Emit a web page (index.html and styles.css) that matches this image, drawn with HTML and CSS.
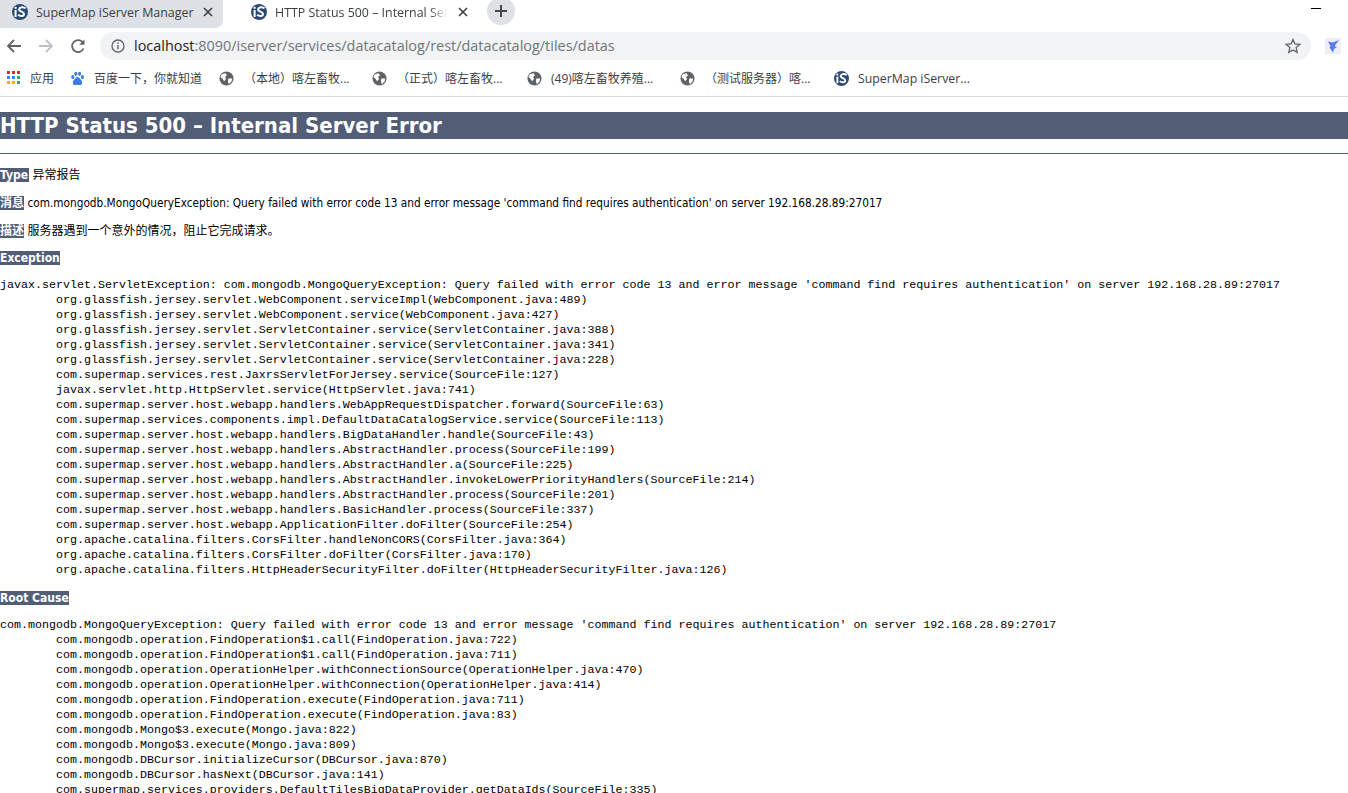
FILE: index.html
```html
<!DOCTYPE html>
<html lang="zh">
<head>
<meta charset="utf-8">
<title>HTTP Status 500 – Internal Server Error</title>
<link rel="stylesheet" href="styles.css">
</head>
<body>
<svg class="defs" width="0" height="0" aria-hidden="true">
  <symbol id="is-logo" viewBox="0 0 16 16">
    <circle cx="8" cy="8" r="8" fill="#2b4a73"/>
    <rect x="2.600" y="6" width="2" height="7" fill="#fff"/>
    <rect x="2.600" y="2.800" width="2" height="2" fill="#fff"/>
    <path d="M13.500 4.400C12 2.800 7.800 2.600 7.100 5.200 6.600 7.800 12 7.400 12 10 12 12.400 8.200 12.600 6.200 10.800" fill="none" stroke="#fff" stroke-width="2"/>
  </symbol>
  <symbol id="globe" viewBox="0 0 16 16">
    <circle cx="8" cy="8" r="7.500" fill="#5f6368"/>
    <path d="M3 3.500 7 2.500 8.500 4.500 6.500 6.500 7.500 8.500 5.500 11 3.500 8 1.500 6.500ZM10 8h4l-.5 3-3 3-1-3Z" fill="#fff"/>
  </symbol>
  <symbol id="tab-x" viewBox="0 0 10 10">
    <path d="M1 1l8 8M9 1l-8 8" stroke="#3c4043" stroke-width="1.600"/>
  </symbol>
</svg>

<header class="chrome">
  <div class="tabstrip">
    <div class="tab tab-inactive">
      <svg class="favicon"><use href="#is-logo"/></svg>
      <span class="tab-title">SuperMap iServer Manager</span>
      <svg class="tab-close"><use href="#tab-x"/></svg>
    </div>
    <div class="tab tab-active">
      <svg class="favicon"><use href="#is-logo"/></svg>
      <span class="tab-title tab-title-fade">HTTP Status 500 – Internal Server Error</span>
      <svg class="tab-close"><use href="#tab-x"/></svg>
    </div>
    <div class="newtab">
      <svg width="12" height="12" viewBox="0 0 12 12"><path d="M6 0v12M0 6h12" stroke="#44474b" stroke-width="2"/></svg>
    </div>
    <div class="window-min"></div>
  </div>
  <div class="toolbar">
    <svg class="nav" viewBox="0 0 16 16"><path d="M15 8H2M8 2 2 8l6 6" fill="none" stroke="#5f6368" stroke-width="1.800"/></svg>
    <svg class="nav" viewBox="0 0 16 16"><path d="M1 8h13M8 2l6 6-6 6" fill="none" stroke="#bdc1c6" stroke-width="1.800"/></svg>
    <svg class="nav" viewBox="0 0 16 16"><path d="M13.600 10.500A6 6 0 1 1 13 4.600" fill="none" stroke="#5f6368" stroke-width="1.800"/><path d="M14.500 1.500v5.200H9.300Z" fill="#5f6368"/></svg>
    <div class="omnibox">
      <svg class="info" viewBox="0 0 14 14"><circle cx="7" cy="7" r="6" fill="none" stroke="#5f6368" stroke-width="1.300"/><path d="M7 6v4.200M7 3.600v1.400" stroke="#5f6368" stroke-width="1.400"/></svg>
      <span class="url"><span class="url-host">localhost</span>:8090/iserver/services/datacatalog/rest/datacatalog/tiles/datas</span>
      <svg class="star" viewBox="0 0 16 16"><path d="M8 1.500 9.900 6l4.900.4-3.700 3.200 1.100 4.800L8 11.900l-4.200 2.500 1.100-4.800L1.200 6.400 6.100 6Z" fill="none" stroke="#5f6368" stroke-width="1.300"/></svg>
    </div>
    <svg class="ext" viewBox="0 0 16 16"><rect width="16" height="16" fill="#eceffb"/><path d="M14 2 8 4.500 3 3.500 5.500 8 4.500 9.500 8 14.500 9 11 12 9 9.500 8Z" fill="#5a78ef"/></svg>
  </div>
  <nav class="bookmarks">
    <div class="bm bm-apps">
      <svg class="bm-icon" viewBox="0 0 14 14">
        <g fill="#d93025"><rect width="3" height="3"/><rect x="5" width="3" height="3"/><rect x="10" width="3" height="3"/></g>
        <g fill="#4285f4"><rect y="5" width="3" height="3"/><rect x="5" y="5" width="3" height="3"/></g>
        <rect x="10" y="5" width="3" height="3" fill="#34a853"/>
        <g fill="#f9ab00"><rect y="10" width="3" height="3"/><rect x="5" y="10" width="3" height="3"/></g>
        <rect x="10" y="10" width="3" height="3" fill="#34a853"/>
      </svg>
      <span>应用</span>
    </div>
    <div class="bm bm-baidu">
      <svg class="bm-icon" viewBox="0 0 16 16" fill="#3a7de0">
        <ellipse cx="3" cy="6.500" rx="1.700" ry="2.200"/><ellipse cx="6.200" cy="3" rx="1.700" ry="2.200"/><ellipse cx="10.200" cy="3" rx="1.700" ry="2.200"/><ellipse cx="13.200" cy="6.500" rx="1.700" ry="2.200"/>
        <path d="M8 6.500c-2 0-2.300 2-4 3.300C2.500 11 2.500 15 5.500 15c1 0 1.500-.4 2.500-.4s1.500.4 2.500.4c3 0 3-4 1.500-5.200C10.300 8.500 10 6.500 8 6.500Z"/>
      </svg>
      <span>百度一下，你就知道</span>
    </div>
    <div class="bm bm-local">
      <svg class="bm-icon"><use href="#globe"/></svg>
      <span>（本地）喀左畜牧...</span>
    </div>
    <div class="bm bm-prod">
      <svg class="bm-icon"><use href="#globe"/></svg>
      <span>（正式）喀左畜牧...</span>
    </div>
    <div class="bm bm-49">
      <svg class="bm-icon"><use href="#globe"/></svg>
      <span>(49)喀左畜牧养殖...</span>
    </div>
    <div class="bm bm-test">
      <svg class="bm-icon"><use href="#globe"/></svg>
      <span>（测试服务器）喀...</span>
    </div>
    <div class="bm bm-sm">
      <svg class="bm-icon"><use href="#is-logo"/></svg>
      <span>SuperMap iServer...</span>
    </div>
  </nav>
</header>

<main class="page">
  <h1 class="title">HTTP Status 500 – Internal Server Error</h1>
  <hr class="line">
  <p class="row"><b class="label label-type">Type</b> 异常报告</p>
  <p class="row"><b class="label">消息</b> <span class="msg">com.mongodb.MongoQueryException: Query failed with error code 13 and error message 'command find requires authentication' on server 192.168.28.89:27017</span></p>
  <p class="row"><b class="label">描述</b> 服务器遇到一个意外的情况，阻止它完成请求。</p>
  <p class="row row-tight"><b class="label">Exception</b></p>
  <pre class="trace">javax.servlet.ServletException: com.mongodb.MongoQueryException: Query failed with error code 13 and error message 'command find requires authentication' on server 192.168.28.89:27017
	org.glassfish.jersey.servlet.WebComponent.serviceImpl(WebComponent.java:489)
	org.glassfish.jersey.servlet.WebComponent.service(WebComponent.java:427)
	org.glassfish.jersey.servlet.ServletContainer.service(ServletContainer.java:388)
	org.glassfish.jersey.servlet.ServletContainer.service(ServletContainer.java:341)
	org.glassfish.jersey.servlet.ServletContainer.service(ServletContainer.java:228)
	com.supermap.services.rest.JaxrsServletForJersey.service(SourceFile:127)
	javax.servlet.http.HttpServlet.service(HttpServlet.java:741)
	com.supermap.server.host.webapp.handlers.WebAppRequestDispatcher.forward(SourceFile:63)
	com.supermap.services.components.impl.DefaultDataCatalogService.service(SourceFile:113)
	com.supermap.server.host.webapp.handlers.BigDataHandler.handle(SourceFile:43)
	com.supermap.server.host.webapp.handlers.AbstractHandler.process(SourceFile:199)
	com.supermap.server.host.webapp.handlers.AbstractHandler.a(SourceFile:225)
	com.supermap.server.host.webapp.handlers.AbstractHandler.invokeLowerPriorityHandlers(SourceFile:214)
	com.supermap.server.host.webapp.handlers.AbstractHandler.process(SourceFile:201)
	com.supermap.server.host.webapp.handlers.BasicHandler.process(SourceFile:337)
	com.supermap.server.host.webapp.ApplicationFilter.doFilter(SourceFile:254)
	org.apache.catalina.filters.CorsFilter.handleNonCORS(CorsFilter.java:364)
	org.apache.catalina.filters.CorsFilter.doFilter(CorsFilter.java:170)
	org.apache.catalina.filters.HttpHeaderSecurityFilter.doFilter(HttpHeaderSecurityFilter.java:126)
</pre>
  <p class="row"><b class="label">Root Cause</b></p>
  <pre class="trace">com.mongodb.MongoQueryException: Query failed with error code 13 and error message 'command find requires authentication' on server 192.168.28.89:27017
	com.mongodb.operation.FindOperation$1.call(FindOperation.java:722)
	com.mongodb.operation.FindOperation$1.call(FindOperation.java:711)
	com.mongodb.operation.OperationHelper.withConnectionSource(OperationHelper.java:470)
	com.mongodb.operation.OperationHelper.withConnection(OperationHelper.java:414)
	com.mongodb.operation.FindOperation.execute(FindOperation.java:711)
	com.mongodb.operation.FindOperation.execute(FindOperation.java:83)
	com.mongodb.Mongo$3.execute(Mongo.java:822)
	com.mongodb.Mongo$3.execute(Mongo.java:809)
	com.mongodb.DBCursor.initializeCursor(DBCursor.java:870)
	com.mongodb.DBCursor.hasNext(DBCursor.java:141)
	com.supermap.services.providers.DefaultTilesBigDataProvider.getDataIds(SourceFile:335)
</pre>
</main>
</body>
</html>
```
FILE: styles.css
```css
html, body {
  margin: 0;
  height: 793px;
  overflow: hidden;
  background: #fff;
}
body {
  font-family: "Liberation Sans", "Noto Sans CJK SC", sans-serif;
  color: #000;
}
.defs { position: absolute; }

/* browser chrome */
.chrome {
  font-family: "Open Sans", "Noto Sans CJK SC", sans-serif;
  border-bottom: 1px solid #dadce0;
}
.tabstrip {
  display: flex;
  align-items: flex-start;
  height: 28px;
}
.tab {
  display: flex;
  align-items: center;
  box-sizing: border-box;
  height: 28px;
  font-size: 12.4px;
  color: #3c4043;
}
.tab-inactive {
  width: 223px;
  padding: 0 10px 0 12px;
  background: #dee1e6;
  border-bottom-right-radius: 8px;
}
.tab-inactive .tab-title { margin-right: 5px; }
.tab-active {
  width: 255px;
  padding: 0 10px 0 28px;
}
.favicon { width: 16px; height: 16px; flex: none; margin-top: -4px; }
.tab-title {
  flex: 1;
  margin: -4px 11px 0 8px;
  white-space: nowrap;
  overflow: hidden;
}
.tab-title-fade {
  -webkit-mask-image: linear-gradient(to right, #000 90%, transparent);
  mask-image: linear-gradient(to right, #000 90%, transparent);
}
.tab-close { width: 10px; height: 10px; flex: none; margin-top: -5px; }
.newtab {
  display: flex;
  align-items: center;
  justify-content: center;
  flex: none;
  width: 28px;
  height: 28px;
  margin: -3px 0 0 9px;
  background: #dee1e6;
  border-radius: 50%;
}
.window-min {
  width: 10px;
  height: 1px;
  margin: 8px 27px 0 auto;
  background: #000;
}
.toolbar {
  display: flex;
  align-items: center;
  height: 36px;
  padding-left: 6px;
}
.nav { width: 16px; height: 16px; flex: none; margin-right: 16px; }
.omnibox {
  display: flex;
  align-items: center;
  box-sizing: border-box;
  width: 1211px;
  height: 28px;
  margin-left: -2px;
  padding: 0 10px 0 11px;
  background: #f1f3f4;
  border-radius: 14px;
}
.info { width: 14px; height: 14px; flex: none; }
.url {
  flex: 1;
  margin-left: 9px;
  padding-bottom: 2px;
  font-size: 14.45px;
  color: #70757a;
}
.url-host { color: #202124; }
.star { width: 16px; height: 16px; flex: none; }
.ext { width: 16px; height: 16px; flex: none; margin-left: 14px; }
.bookmarks {
  display: flex;
  align-items: center;
  box-sizing: border-box;
  height: 32px;
  padding-bottom: 4px;
  font-size: 12px;
  color: #3c4043;
  white-space: nowrap;
}
.bm { display: flex; align-items: center; flex: none; }
.bm-icon { width: 15px; height: 15px; flex: none; margin-right: 10px; }
.bm-apps { width: 70px; padding-left: 7px; box-sizing: border-box; }
.bm-apps .bm-icon { width: 14px; height: 14px; margin-right: 9px; }
.bm-baidu { width: 149px; }
.bm-baidu .bm-icon { margin-right: 9px; }
.bm-local { width: 153px; }
.bm-prod { width: 155px; }
.bm-49 { width: 153px; }
.bm-49 .bm-icon { margin-right: 9px; }
.bm-test { width: 154px; }
.bm-sm { font-size: 12.3px; }
.bm-sm .bm-icon { margin-right: 9px; }

/* error page */
.page {
  padding-top: 15px;
  font-family: "DejaVu Sans", "Noto Sans CJK SC", sans-serif;
  font-stretch: condensed;
  font-size: 12px;
}
.title {
  margin: 0;
  height: 27px;
  font-size: 22px;
  font-weight: 700;
  line-height: 28px;
  color: #fff;
  background: #525d76;
  white-space: nowrap;
}
.line {
  height: 1px;
  margin: 14px 0;
  border: 0;
  background: #525d76;
}
.row {
  margin: 13px 0 0;
  height: 15px;
  line-height: 15px;
  white-space: nowrap;
}
.row-tight { margin-top: 12px; }
.label {
  font-weight: 700;
  color: #fff;
  background: #525d76;
}
.label-type { padding-right: 1px; }
.msg { font-size: 11.73px; }
.trace {
  margin: 12px 0 0;
  font-family: "Liberation Mono", monospace;
  font-size: 11.67px;
  line-height: 15px;
  tab-size: 8;
}
```
